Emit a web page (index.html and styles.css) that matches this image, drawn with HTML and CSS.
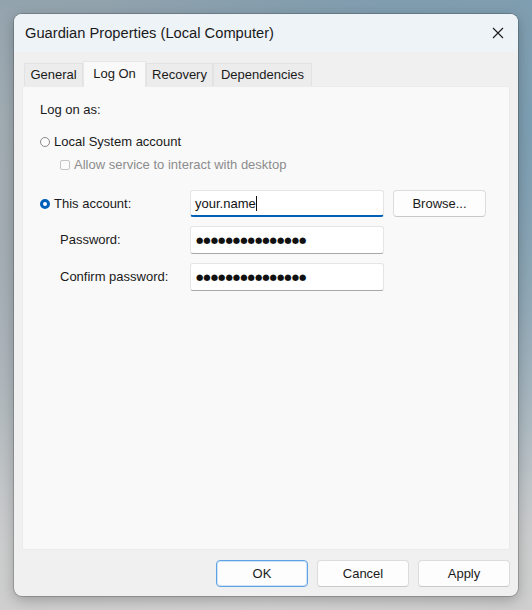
FILE: index.html
```html
<!DOCTYPE html>
<html>
<head>
<meta charset="utf-8">
<link rel="stylesheet" href="styles.css">
</head>
<body>
<div class="window">
  <div class="titlebar">
    <span class="title">Guardian Properties (Local Computer)</span>
    <svg class="close" width="12" height="12" viewBox="0 0 12 12"><path d="M1 1 L11 11 M11 1 L1 11" stroke="#1a1a1a" stroke-width="1.1" fill="none"/></svg>
  </div>
  <div class="body">
    <div class="tabs">
      <div class="tab t-general">General</div>
      <div class="tab active t-logon">Log On</div>
      <div class="tab t-recovery">Recovery</div>
      <div class="tab t-deps">Dependencies</div>
    </div>
    <div class="panel">
      <div class="heading">Log on as:</div>
      <div class="row radio-row">
        <span class="radio"></span><span>Local System account</span>
      </div>
      <div class="row check-row">
        <span class="check"></span><span class="disabled">Allow service to interact with desktop</span>
      </div>
      <div class="grid">
        <div class="row lab"><span class="radio on"></span><span>This account:</span></div>
        <div class="input focused"><span>your.name</span><span class="caret"></span></div>
        <div class="btn browse">Browse...</div>
        <div class="lab indent">Password:</div>
        <div class="input dots">●●●●●●●●●●●●●●●</div>
        <div></div>
        <div class="lab indent">Confirm password:</div>
        <div class="input dots">●●●●●●●●●●●●●●●</div>
        <div></div>
      </div>
    </div>
    <div class="buttons">
      <div class="btn default">OK</div>
      <div class="btn">Cancel</div>
      <div class="btn">Apply</div>
    </div>
  </div>
</div>
</body>
</html>
```
FILE: styles.css
```css
html, body {
  margin: 0;
  padding: 0;
}
body {
  width: 532px;
  height: 610px;
  overflow: hidden;
  font-family: "Liberation Sans", Arial, sans-serif;
  font-size: 13px;
  color: #1a1a1a;
  background:
    radial-gradient(ellipse at 100% 20%, #7d9fb3 0%, rgba(125,159,179,0) 60%),
    radial-gradient(ellipse at 0% 30%, #a3adb3 0%, rgba(163,173,179,0) 60%),
    radial-gradient(ellipse at 50% 100%, #d2d2d2 0%, rgba(210,210,210,0) 70%),
    linear-gradient(180deg, #8399a8 0%, #a9b4bb 45%, #c9cbcc 80%, #cfcfcf 100%);
}
.window {
  position: relative;
  margin: 14px 0 0 14px;
  width: 504px;
  height: 582px;
  border-radius: 8px;
  background: #f0f0f0;
  box-shadow: 0 0 0 1px rgba(0,0,0,0.18), 0 4px 14px rgba(0,0,0,0.25);
  overflow: hidden;
  display: flex;
  flex-direction: column;
}
.titlebar {
  height: 38px;
  background: #eef3f8;
  display: flex;
  align-items: center;
  justify-content: space-between;
  padding: 0 14px 0 11px;
  flex: none;
}
.title {
  font-size: 14.7px;
  color: #1a1a1a;
  padding-bottom: 1px;
}
.close {
  display: block;
}
.body {
  flex: 1;
  display: flex;
  flex-direction: column;
  padding: 0 8px 9px 8px;
}
.tabs {
  display: flex;
  align-items: flex-end;
  margin-top: 9px;
  height: 25px;
  padding-left: 2px;
  flex: none;
}
.tab {
  height: 23px;
  line-height: 22px;
  text-align: center;
  background: #ececec;
  border: 1px solid #e2e2e2;
  border-bottom: none;
  color: #1a1a1a;
  box-sizing: border-box;
  white-space: nowrap;
}
.t-general { width: 59px; }
.t-logon { width: 63px; }
.t-recovery { width: 67px; }
.t-deps { width: 99px; }
.tab.active {
  height: 26px;
  line-height: 24px;
  background: #f9f9f9;
  border-color: #e6e6e6;
  position: relative;
  top: 1px;
}
.panel {
  height: 464px;
  background: #f9f9f9;
  border: 1px solid #ebebeb;
  box-sizing: border-box;
  padding-left: 17px;
  display: flex;
  flex-direction: column;
  flex: none;
}
.heading {
  margin-top: 15px;
  line-height: 16px;
}
.row {
  display: flex;
  align-items: center;
  line-height: 16px;
}
.radio-row {
  margin-top: 16px;
}
.check-row {
  margin-top: 7px;
  padding-left: 20px;
}
.radio {
  width: 10px;
  height: 10px;
  box-sizing: border-box;
  border: 1px solid #8a8a8a;
  border-radius: 50%;
  background: #fdfdfd;
  margin-right: 4px;
  flex: none;
}
.radio.on {
  border: 3px solid #005fb8;
  background: #ffffff;
}
.check {
  width: 10px;
  height: 10px;
  box-sizing: border-box;
  border: 1px solid #c4c4c4;
  border-radius: 2px;
  background: #fbfbfb;
  margin-right: 4px;
  flex: none;
}
.disabled {
  color: #8c8c8c;
}
.grid {
  margin-top: 17px;
  display: grid;
  grid-template-columns: 141px 194px 93px;
  column-gap: 9px;
  row-gap: 9px;
  align-items: center;
}
.lab {
  line-height: 16px;
}
.indent {
  padding-left: 20px;
}
.input {
  height: 28px;
  box-sizing: border-box;
  background: #ffffff;
  border: 1px solid #e5e5e5;
  border-bottom: 1px solid #a8a8a8;
  border-radius: 3px;
  display: flex;
  align-items: center;
  padding-left: 4px;
  color: #111;
}
.input.focused {
  height: 27px;
  border-bottom: 2px solid #005fb8;
  padding-top: 1px;
}
.caret {
  display: inline-block;
  width: 1px;
  height: 15px;
  background: #111;
}
.dots {
  font-family: "DejaVu Sans", sans-serif;
  font-size: 8.45px;
  padding-left: 5px;
}
.btn {
  height: 27px;
  box-sizing: border-box;
  background: #fdfdfd;
  border: 1px solid #dcdcdc;
  border-bottom-color: #c9c9c9;
  border-radius: 4px;
  display: flex;
  align-items: center;
  justify-content: center;
}
.buttons {
  margin-top: auto;
  display: flex;
  justify-content: flex-end;
  gap: 9px;
}
.buttons .btn {
  width: 92px;
}
.btn.default {
  border: 1px solid #5fa3e6;
  box-shadow: inset 0 0 0 1px #cfe3f7;
}
```
